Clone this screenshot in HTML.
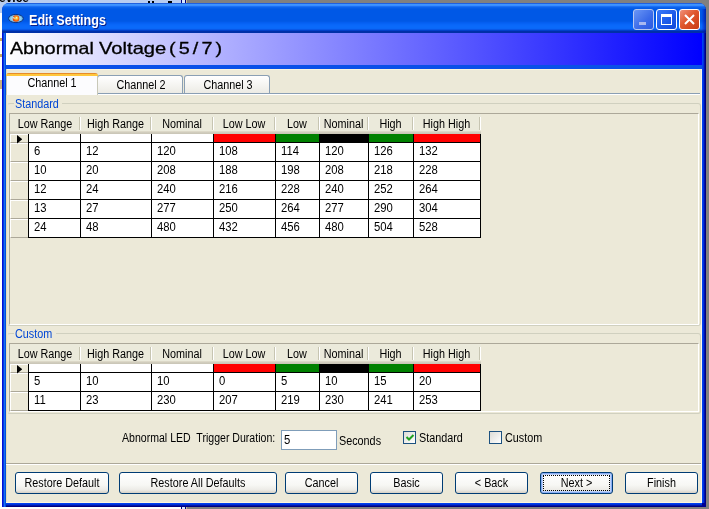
<!DOCTYPE html>
<html><head><meta charset="utf-8">
<style>
*{box-sizing:border-box;margin:0;padding:0}
html,body{width:709px;height:509px;overflow:hidden;background:#808080;font-family:"Liberation Sans",sans-serif;font-size:11px;color:#000}
.a{position:absolute}
.hdr{background:linear-gradient(to bottom,#ebeadb 0,#ebeadb 17px,#e2decd 17px,#d6d2c2 18px,#cbc7b8 19px)}
.t{white-space:nowrap;line-height:14px;font-size:12px}
.rh{background:#ece9d8;border-top:1px solid #fff;border-left:1px solid #fff;border-bottom:1px solid #aca899}
.btn{height:22px;border:1px solid #003c74;border-radius:3px;background:linear-gradient(to bottom,#fff 0%,#f7f7f4 60%,#ecebe6 85%,#d6d0c5 100%);text-align:center;line-height:20px;white-space:nowrap}
.tab{border:1px solid #8a9fb4;border-bottom:none;border-radius:3px 3px 0 0;background:linear-gradient(to bottom,#fff,#ecebe5);text-align:center;line-height:13px}
.gb{border:1px solid #d0d0bf;border-left-color:#e8e6d8;border-radius:3px}
.gt{color:#0046d5;background:#ece9d8;padding:0 2px;line-height:13px;white-space:nowrap}
#root{position:absolute;left:0;top:0;width:709px;height:509px;overflow:hidden;will-change:transform;background:#808080}
</style></head><body><div id="root">
<div class="a" style="left:0;top:0;width:186px;height:14px;background:#b8ccf0"></div>
<div class="a" style="left:0;top:13px;width:2px;height:496px;background:#fff"></div>
<div class="a" style="left:0;top:-8px;width:40px;height:11px;overflow:hidden;font-weight:bold;font-size:12px;line-height:12px;color:#000;white-space:nowrap"><span style="position:absolute;left:-1px;top:0">evice</span></div>
<div class="a" style="left:148px;top:1px;width:2px;height:2px;background:#000"></div><div class="a" style="left:152px;top:1px;width:2px;height:2px;background:#000"></div>
<div class="a" style="left:168px;top:1px;width:4px;height:2px;background:#000"></div>
<div class="a" style="left:181px;top:0px;width:1px;height:4px;background:#000080"></div><div class="a" style="left:182px;top:0px;width:3px;height:4px;background:#d8e8ff"></div><div class="a" style="left:185px;top:0px;width:1px;height:4px;background:#000080"></div><div class="a" style="left:186px;top:0px;width:1px;height:4px;background:#c8b890"></div>
<div class="a" style="left:181px;top:507px;width:1px;height:4px;background:#000080"></div><div class="a" style="left:182px;top:507px;width:3px;height:4px;background:#d8e8ff"></div><div class="a" style="left:185px;top:507px;width:1px;height:4px;background:#000080"></div><div class="a" style="left:186px;top:507px;width:1px;height:4px;background:#c8b890"></div>
<div class="a" style="left:0;top:507px;width:181px;height:2px;background:#fff"></div>
<div class="a" style="left:0;top:38px;width:2px;height:3px;background:#c8a860"></div><div class="a" style="left:0;top:54px;width:2px;height:3px;background:#c8a860"></div><div class="a" style="left:0;top:80px;width:2px;height:9px;background:#c8b080"></div>
<div class="a" style="left:2px;top:3px;width:704px;height:504px;border-radius:7px 7px 0 0;background:linear-gradient(to right,#0010d8 0,#0010d8 1px,#0838e0 1px,#0838e0 2px,#1870f0 2px,#1870f0 3px,#0050e0 3px,#0050e0 4px,#0a50e8 4px,#0a50e8 700px,#0040f0 700px,#0040f0 701px,#0030e0 701px,#0030e0 702px,#0010b0 702px,#0010b0 703px,#000080 703px)"></div>
<div class="a" style="left:6px;top:503px;width:696px;height:4px;background:linear-gradient(to bottom,#0040f0 0,#0040f0 1px,#0030d8 1px,#0030d8 2px,#0018a8 2px,#0018a8 3px,#000080 3px)"></div>
<div class="a" style="left:2px;top:503px;width:4px;height:4px;background:linear-gradient(to right,#0010d8 0,#0010d8 1px,#0838e0 1px,#0838e0 2px,#1870f0 2px,#1870f0 3px,#0050e0 3px)"></div>
<div class="a" style="left:702px;top:503px;width:4px;height:4px;background:#000090"></div>
<div class="a" style="left:2px;top:3px;width:704px;height:30px;border-radius:7px 7px 0 0;
 background:linear-gradient(to bottom,#2060e0 0px,#2060e0 1px,#3d95ff 1px,#3d95ff 2px,#3a8cff 2px,#3a8cff 3px,#1a70f5 3px,#1a70f5 4px,#0a62ec 4px,#0a62ec 5px,#045ce8 5px,#045ce8 6px,#0058e6 6px,#0058e6 7px,#0058e6 7px,#0058e6 8px,#0058e6 8px,#0058e6 9px,#0058e6 9px,#0058e6 10px,#0058e6 10px,#0058e6 11px,#0058e6 11px,#0058e6 12px,#0058e6 12px,#0058e6 13px,#0058e6 13px,#0058e6 14px,#0058e6 14px,#0058e6 15px,#0058e6 15px,#0058e6 16px,#0058e6 16px,#0058e6 17px,#0058e6 17px,#0058e6 18px,#025ae8 18px,#025ae8 19px,#045ef0 19px,#045ef0 20px,#0662f4 20px,#0662f4 21px,#0866f8 21px,#0866f8 22px,#0a68fa 22px,#0a68fa 23px,#0a6afa 23px,#0a6afa 24px,#0a6afa 24px,#0a6afa 25px,#0a68f8 25px,#0a68f8 26px,#0858e8 26px,#0858e8 27px,#0040c8 27px,#0040c8 28px,#0030a8 28px,#0030a8 29px)"></div>
<div class="a" style="left:702px;top:9px;width:4px;height:24px;background:linear-gradient(to right,rgba(0,40,230,.15),rgba(0,20,180,.45) 2px,rgba(0,0,128,.6))"></div>
<svg class="a" style="left:6px;top:12px" width="20" height="14"><defs><radialGradient id="og" cx="0.5" cy="0.5" r="0.55" fx="0.62" fy="0.38"><stop offset="0" stop-color="#fffef0"/><stop offset="0.25" stop-color="#ffd040"/><stop offset="0.65" stop-color="#f87010"/><stop offset="1" stop-color="#d02800"/></radialGradient><radialGradient id="eg" cx="0.5" cy="0.5" r="0.5"><stop offset="0.5" stop-color="#a8e0f8"/><stop offset="1" stop-color="#5aa8d8"/></radialGradient></defs><ellipse cx="9.9" cy="6.5" rx="7.4" ry="4.1" fill="url(#eg)" stroke="#0c2c78" stroke-width="0.9"/><circle cx="10" cy="6.5" r="3.3" fill="url(#og)"/><path d="M6.8 4.8 L10 6.8 L6.8 6.2 Z" fill="#c0f8ff"/></svg>
<div class="a" style="left:29px;top:12px;color:#fff;font-weight:bold;font-size:14px;line-height:16px;text-shadow:1px 1px 0 #0a1e8a;white-space:nowrap;transform-origin:0 0;transform:scaleX(0.9)">Edit Settings</div>
<div class="a" style="left:633px;top:9px;width:21px;height:21px;border:1px solid #b8c8f0;border-radius:3px;background:linear-gradient(135deg,#6a96f5,#3a6ae8 60%,#2a5ae0)"><div class="a" style="left:5px;top:12px;width:7px;height:3px;background:#a8b8f0"></div></div>
<div class="a" style="left:656px;top:9px;width:21px;height:21px;border:1px solid #fff;border-radius:3px;background:linear-gradient(135deg,#3a78f8,#1a58e8 60%,#1048d8)"><div class="a" style="left:4px;top:4px;width:11px;height:11px;border:1px solid #fff;border-top-width:3px"></div></div>
<div class="a" style="left:679px;top:9px;width:21px;height:21px;border:1px solid #fff;border-radius:3px;background:linear-gradient(135deg,#f0907a,#e0582e 45%,#c83a12)"><svg class="a" style="left:4px;top:4px" width="11" height="11"><path d="M1 1 L10 10 M10 1 L1 10" stroke="#fff" stroke-width="2"/></svg></div>
<div class="a" style="left:6px;top:33px;width:696px;height:32px;background:linear-gradient(to right,#fff,#0000ff)"></div>
<div class="a" style="left:6px;top:65px;width:696px;height:4px;background:#0a50e8"></div>
<div class="a" style="left:10px;top:38px;font-size:16.5px;line-height:20px;-webkit-text-stroke:0.3px #000;white-space:nowrap;letter-spacing:0px;transform-origin:0 0;transform:scaleX(1.186)">Abnormal</div>
<div class="a" style="left:99px;top:38px;font-size:16.5px;line-height:20px;-webkit-text-stroke:0.3px #000;white-space:nowrap;letter-spacing:0px;transform-origin:0 0;transform:scaleX(1.222)">Voltage</div>
<div class="a" style="left:169px;top:38px;font-size:16.5px;line-height:20px;-webkit-text-stroke:0.3px #000;white-space:nowrap;letter-spacing:2.6px;transform-origin:0 0;transform:scaleX(1.2)">(5/7)</div>
<div class="a" style="left:6px;top:69px;width:696px;height:434px;background:#ece9d8"></div>
<div class="a" style="left:6px;top:69px;width:696px;height:1px;background:#fdf6dc"></div>
<div class="a" style="left:6px;top:69px;width:1px;height:434px;background:#e4dcb8"></div>
<div class="a" style="left:6px;top:502px;width:696px;height:1px;background:#fdf6dc"></div>
<div class="a" style="left:701px;top:69px;width:1px;height:434px;background:#fdf8e8"></div>
<div class="a" style="left:6px;top:93px;width:694px;height:1px;background:#8a9fb4"></div>
<div class="a" style="left:6px;top:94px;width:694px;height:1px;background:#fff"></div>
<div class="a tab" style="left:97px;top:75px;width:86px;height:18px"></div>
<div class="a t" style="left:98px;top:78px;width:86px;text-align:center;transform:scaleX(0.9);transform-origin:50% 0;">Channel 2</div>
<div class="a tab" style="left:184px;top:75px;width:86px;height:18px"></div>
<div class="a t" style="left:185px;top:78px;width:86px;text-align:center;transform:scaleX(0.9);transform-origin:50% 0;">Channel 3</div>
<div class="a" style="left:6px;top:73px;width:92px;height:22px;border:1px solid #c8c8b8;border-bottom:none;border-top:none;border-radius:3px 3px 0 0;background:#fcfcfe"><div class="a" style="left:-1px;top:0;width:92px;height:3px;border-radius:3px 3px 0 0;background:linear-gradient(to bottom,#e68b2c 0,#e68b2c 1px,#ffc73c 1px)"></div></div>
<div class="a t" style="left:6px;top:76px;width:92px;text-align:center;transform:scaleX(0.9);transform-origin:50% 0;">Channel 1</div>
<div class="a gb" style="left:7px;top:103px;width:694px;height:223px"></div>
<div class="a" style="left:14px;top:100px;width:48px;height:8px;background:#ece9d8"></div>
<div class="a t" style="left:15px;top:97px;color:#0046d5;transform:scaleX(0.9);transform-origin:0 0;">Standard</div>
<div class="a gb" style="left:7px;top:333px;width:694px;height:81px"></div>
<div class="a" style="left:14px;top:330px;width:42px;height:8px;background:#ece9d8"></div>
<div class="a t" style="left:15px;top:327px;color:#0046d5;transform:scaleX(0.9);transform-origin:0 0;">Custom</div>
<div class="a" style="left:9px;top:113px;width:690px;height:212px;border-top:1px solid #aca899;border-left:1px solid #aca899;border-right:1px solid #fff;border-bottom:1px solid #fff"></div>
<div class="a hdr" style="left:10px;top:114px;width:471px;height:20px"></div>
<div class="a" style="left:79px;top:117px;width:1px;height:13px;background:#c7c5b2"></div>
<div class="a" style="left:80px;top:117px;width:1px;height:13px;background:#fff"></div>
<div class="a" style="left:150px;top:117px;width:1px;height:13px;background:#c7c5b2"></div>
<div class="a" style="left:151px;top:117px;width:1px;height:13px;background:#fff"></div>
<div class="a" style="left:212px;top:117px;width:1px;height:13px;background:#c7c5b2"></div>
<div class="a" style="left:213px;top:117px;width:1px;height:13px;background:#fff"></div>
<div class="a" style="left:274px;top:117px;width:1px;height:13px;background:#c7c5b2"></div>
<div class="a" style="left:275px;top:117px;width:1px;height:13px;background:#fff"></div>
<div class="a" style="left:318px;top:117px;width:1px;height:13px;background:#c7c5b2"></div>
<div class="a" style="left:319px;top:117px;width:1px;height:13px;background:#fff"></div>
<div class="a" style="left:367px;top:117px;width:1px;height:13px;background:#c7c5b2"></div>
<div class="a" style="left:368px;top:117px;width:1px;height:13px;background:#fff"></div>
<div class="a" style="left:412px;top:117px;width:1px;height:13px;background:#c7c5b2"></div>
<div class="a" style="left:413px;top:117px;width:1px;height:13px;background:#fff"></div>
<div class="a" style="left:479px;top:117px;width:1px;height:13px;background:#c7c5b2"></div>
<div class="a" style="left:480px;top:117px;width:1px;height:13px;background:#fff"></div>
<div class="a t" style="left:10px;top:117px;width:70px;text-align:center;transform:scaleX(0.9);transform-origin:50% 0;">Low Range</div>
<div class="a t" style="left:80px;top:117px;width:71px;text-align:center;transform:scaleX(0.9);transform-origin:50% 0;">High Range</div>
<div class="a t" style="left:151px;top:117px;width:62px;text-align:center;transform:scaleX(0.9);transform-origin:50% 0;">Nominal</div>
<div class="a t" style="left:213px;top:117px;width:62px;text-align:center;transform:scaleX(0.9);transform-origin:50% 0;">Low Low</div>
<div class="a t" style="left:275px;top:117px;width:44px;text-align:center;transform:scaleX(0.9);transform-origin:50% 0;">Low</div>
<div class="a t" style="left:319px;top:117px;width:49px;text-align:center;transform:scaleX(0.9);transform-origin:50% 0;">Nominal</div>
<div class="a t" style="left:368px;top:117px;width:45px;text-align:center;transform:scaleX(0.9);transform-origin:50% 0;">High</div>
<div class="a t" style="left:413px;top:117px;width:67px;text-align:center;transform:scaleX(0.9);transform-origin:50% 0;">High High</div>
<div class="a" style="left:28px;top:134px;width:453px;height:104px;background:#fff"></div>
<div class="a" style="left:214px;top:134px;width:61px;height:8px;background:#ff0000"></div>
<div class="a" style="left:276px;top:134px;width:43px;height:8px;background:#008000"></div>
<div class="a" style="left:320px;top:134px;width:48px;height:8px;background:#000000"></div>
<div class="a" style="left:369px;top:134px;width:44px;height:8px;background:#008000"></div>
<div class="a" style="left:414px;top:134px;width:66px;height:8px;background:#ff0000"></div>
<div class="a" style="left:28px;top:134px;width:1px;height:104px;background:#000"></div>
<div class="a" style="left:80px;top:134px;width:1px;height:104px;background:#000"></div>
<div class="a" style="left:151px;top:134px;width:1px;height:104px;background:#000"></div>
<div class="a" style="left:213px;top:134px;width:1px;height:104px;background:#000"></div>
<div class="a" style="left:275px;top:134px;width:1px;height:104px;background:#000"></div>
<div class="a" style="left:319px;top:134px;width:1px;height:104px;background:#000"></div>
<div class="a" style="left:368px;top:134px;width:1px;height:104px;background:#000"></div>
<div class="a" style="left:413px;top:134px;width:1px;height:104px;background:#000"></div>
<div class="a" style="left:480px;top:134px;width:1px;height:104px;background:#000"></div>
<div class="a" style="left:28px;top:142px;width:453px;height:1px;background:#000"></div>
<div class="a" style="left:28px;top:161px;width:453px;height:1px;background:#000"></div>
<div class="a" style="left:28px;top:180px;width:453px;height:1px;background:#000"></div>
<div class="a" style="left:28px;top:199px;width:453px;height:1px;background:#000"></div>
<div class="a" style="left:28px;top:218px;width:453px;height:1px;background:#000"></div>
<div class="a" style="left:28px;top:237px;width:453px;height:1px;background:#000"></div>
<div class="a rh" style="left:10px;top:134px;width:18px;height:9px"></div>
<div class="a rh" style="left:10px;top:143px;width:18px;height:19px"></div>
<div class="a rh" style="left:10px;top:162px;width:18px;height:19px"></div>
<div class="a rh" style="left:10px;top:181px;width:18px;height:19px"></div>
<div class="a rh" style="left:10px;top:200px;width:18px;height:19px"></div>
<div class="a rh" style="left:10px;top:219px;width:18px;height:19px"></div>
<svg class="a" style="left:17px;top:135px" width="6" height="9"><path d="M0 0 L5 4 L5 4.5 L0 8.5 Z" fill="#000"/></svg>
<div class="a t" style="left:34px;top:144px;transform:scaleX(0.94);transform-origin:0 0;">6</div>
<div class="a t" style="left:86px;top:144px;transform:scaleX(0.94);transform-origin:0 0;">12</div>
<div class="a t" style="left:157px;top:144px;transform:scaleX(0.94);transform-origin:0 0;">120</div>
<div class="a t" style="left:219px;top:144px;transform:scaleX(0.94);transform-origin:0 0;">108</div>
<div class="a t" style="left:281px;top:144px;transform:scaleX(0.94);transform-origin:0 0;">114</div>
<div class="a t" style="left:325px;top:144px;transform:scaleX(0.94);transform-origin:0 0;">120</div>
<div class="a t" style="left:374px;top:144px;transform:scaleX(0.94);transform-origin:0 0;">126</div>
<div class="a t" style="left:419px;top:144px;transform:scaleX(0.94);transform-origin:0 0;">132</div>
<div class="a t" style="left:34px;top:163px;transform:scaleX(0.94);transform-origin:0 0;">10</div>
<div class="a t" style="left:86px;top:163px;transform:scaleX(0.94);transform-origin:0 0;">20</div>
<div class="a t" style="left:157px;top:163px;transform:scaleX(0.94);transform-origin:0 0;">208</div>
<div class="a t" style="left:219px;top:163px;transform:scaleX(0.94);transform-origin:0 0;">188</div>
<div class="a t" style="left:281px;top:163px;transform:scaleX(0.94);transform-origin:0 0;">198</div>
<div class="a t" style="left:325px;top:163px;transform:scaleX(0.94);transform-origin:0 0;">208</div>
<div class="a t" style="left:374px;top:163px;transform:scaleX(0.94);transform-origin:0 0;">218</div>
<div class="a t" style="left:419px;top:163px;transform:scaleX(0.94);transform-origin:0 0;">228</div>
<div class="a t" style="left:34px;top:182px;transform:scaleX(0.94);transform-origin:0 0;">12</div>
<div class="a t" style="left:86px;top:182px;transform:scaleX(0.94);transform-origin:0 0;">24</div>
<div class="a t" style="left:157px;top:182px;transform:scaleX(0.94);transform-origin:0 0;">240</div>
<div class="a t" style="left:219px;top:182px;transform:scaleX(0.94);transform-origin:0 0;">216</div>
<div class="a t" style="left:281px;top:182px;transform:scaleX(0.94);transform-origin:0 0;">228</div>
<div class="a t" style="left:325px;top:182px;transform:scaleX(0.94);transform-origin:0 0;">240</div>
<div class="a t" style="left:374px;top:182px;transform:scaleX(0.94);transform-origin:0 0;">252</div>
<div class="a t" style="left:419px;top:182px;transform:scaleX(0.94);transform-origin:0 0;">264</div>
<div class="a t" style="left:34px;top:201px;transform:scaleX(0.94);transform-origin:0 0;">13</div>
<div class="a t" style="left:86px;top:201px;transform:scaleX(0.94);transform-origin:0 0;">27</div>
<div class="a t" style="left:157px;top:201px;transform:scaleX(0.94);transform-origin:0 0;">277</div>
<div class="a t" style="left:219px;top:201px;transform:scaleX(0.94);transform-origin:0 0;">250</div>
<div class="a t" style="left:281px;top:201px;transform:scaleX(0.94);transform-origin:0 0;">264</div>
<div class="a t" style="left:325px;top:201px;transform:scaleX(0.94);transform-origin:0 0;">277</div>
<div class="a t" style="left:374px;top:201px;transform:scaleX(0.94);transform-origin:0 0;">290</div>
<div class="a t" style="left:419px;top:201px;transform:scaleX(0.94);transform-origin:0 0;">304</div>
<div class="a t" style="left:34px;top:220px;transform:scaleX(0.94);transform-origin:0 0;">24</div>
<div class="a t" style="left:86px;top:220px;transform:scaleX(0.94);transform-origin:0 0;">48</div>
<div class="a t" style="left:157px;top:220px;transform:scaleX(0.94);transform-origin:0 0;">480</div>
<div class="a t" style="left:219px;top:220px;transform:scaleX(0.94);transform-origin:0 0;">432</div>
<div class="a t" style="left:281px;top:220px;transform:scaleX(0.94);transform-origin:0 0;">456</div>
<div class="a t" style="left:325px;top:220px;transform:scaleX(0.94);transform-origin:0 0;">480</div>
<div class="a t" style="left:374px;top:220px;transform:scaleX(0.94);transform-origin:0 0;">504</div>
<div class="a t" style="left:419px;top:220px;transform:scaleX(0.94);transform-origin:0 0;">528</div>
<div class="a" style="left:9px;top:343px;width:690px;height:69px;border-top:1px solid #aca899;border-left:1px solid #aca899;border-right:1px solid #fff;border-bottom:1px solid #fff"></div>
<div class="a hdr" style="left:10px;top:344px;width:471px;height:20px"></div>
<div class="a" style="left:79px;top:347px;width:1px;height:13px;background:#c7c5b2"></div>
<div class="a" style="left:80px;top:347px;width:1px;height:13px;background:#fff"></div>
<div class="a" style="left:150px;top:347px;width:1px;height:13px;background:#c7c5b2"></div>
<div class="a" style="left:151px;top:347px;width:1px;height:13px;background:#fff"></div>
<div class="a" style="left:212px;top:347px;width:1px;height:13px;background:#c7c5b2"></div>
<div class="a" style="left:213px;top:347px;width:1px;height:13px;background:#fff"></div>
<div class="a" style="left:274px;top:347px;width:1px;height:13px;background:#c7c5b2"></div>
<div class="a" style="left:275px;top:347px;width:1px;height:13px;background:#fff"></div>
<div class="a" style="left:318px;top:347px;width:1px;height:13px;background:#c7c5b2"></div>
<div class="a" style="left:319px;top:347px;width:1px;height:13px;background:#fff"></div>
<div class="a" style="left:367px;top:347px;width:1px;height:13px;background:#c7c5b2"></div>
<div class="a" style="left:368px;top:347px;width:1px;height:13px;background:#fff"></div>
<div class="a" style="left:412px;top:347px;width:1px;height:13px;background:#c7c5b2"></div>
<div class="a" style="left:413px;top:347px;width:1px;height:13px;background:#fff"></div>
<div class="a" style="left:479px;top:347px;width:1px;height:13px;background:#c7c5b2"></div>
<div class="a" style="left:480px;top:347px;width:1px;height:13px;background:#fff"></div>
<div class="a t" style="left:10px;top:347px;width:70px;text-align:center;transform:scaleX(0.9);transform-origin:50% 0;">Low Range</div>
<div class="a t" style="left:80px;top:347px;width:71px;text-align:center;transform:scaleX(0.9);transform-origin:50% 0;">High Range</div>
<div class="a t" style="left:151px;top:347px;width:62px;text-align:center;transform:scaleX(0.9);transform-origin:50% 0;">Nominal</div>
<div class="a t" style="left:213px;top:347px;width:62px;text-align:center;transform:scaleX(0.9);transform-origin:50% 0;">Low Low</div>
<div class="a t" style="left:275px;top:347px;width:44px;text-align:center;transform:scaleX(0.9);transform-origin:50% 0;">Low</div>
<div class="a t" style="left:319px;top:347px;width:49px;text-align:center;transform:scaleX(0.9);transform-origin:50% 0;">Nominal</div>
<div class="a t" style="left:368px;top:347px;width:45px;text-align:center;transform:scaleX(0.9);transform-origin:50% 0;">High</div>
<div class="a t" style="left:413px;top:347px;width:67px;text-align:center;transform:scaleX(0.9);transform-origin:50% 0;">High High</div>
<div class="a" style="left:28px;top:364px;width:453px;height:47px;background:#fff"></div>
<div class="a" style="left:214px;top:364px;width:61px;height:8px;background:#ff0000"></div>
<div class="a" style="left:276px;top:364px;width:43px;height:8px;background:#008000"></div>
<div class="a" style="left:320px;top:364px;width:48px;height:8px;background:#000000"></div>
<div class="a" style="left:369px;top:364px;width:44px;height:8px;background:#008000"></div>
<div class="a" style="left:414px;top:364px;width:66px;height:8px;background:#ff0000"></div>
<div class="a" style="left:28px;top:364px;width:1px;height:47px;background:#000"></div>
<div class="a" style="left:80px;top:364px;width:1px;height:47px;background:#000"></div>
<div class="a" style="left:151px;top:364px;width:1px;height:47px;background:#000"></div>
<div class="a" style="left:213px;top:364px;width:1px;height:47px;background:#000"></div>
<div class="a" style="left:275px;top:364px;width:1px;height:47px;background:#000"></div>
<div class="a" style="left:319px;top:364px;width:1px;height:47px;background:#000"></div>
<div class="a" style="left:368px;top:364px;width:1px;height:47px;background:#000"></div>
<div class="a" style="left:413px;top:364px;width:1px;height:47px;background:#000"></div>
<div class="a" style="left:480px;top:364px;width:1px;height:47px;background:#000"></div>
<div class="a" style="left:28px;top:372px;width:453px;height:1px;background:#000"></div>
<div class="a" style="left:28px;top:391px;width:453px;height:1px;background:#000"></div>
<div class="a" style="left:28px;top:410px;width:453px;height:1px;background:#000"></div>
<div class="a rh" style="left:10px;top:364px;width:18px;height:9px"></div>
<div class="a rh" style="left:10px;top:373px;width:18px;height:19px"></div>
<div class="a rh" style="left:10px;top:392px;width:18px;height:19px"></div>
<svg class="a" style="left:17px;top:365px" width="6" height="9"><path d="M0 0 L5 4 L5 4.5 L0 8.5 Z" fill="#000"/></svg>
<div class="a t" style="left:34px;top:374px;transform:scaleX(0.94);transform-origin:0 0;">5</div>
<div class="a t" style="left:86px;top:374px;transform:scaleX(0.94);transform-origin:0 0;">10</div>
<div class="a t" style="left:157px;top:374px;transform:scaleX(0.94);transform-origin:0 0;">10</div>
<div class="a t" style="left:219px;top:374px;transform:scaleX(0.94);transform-origin:0 0;">0</div>
<div class="a t" style="left:281px;top:374px;transform:scaleX(0.94);transform-origin:0 0;">5</div>
<div class="a t" style="left:325px;top:374px;transform:scaleX(0.94);transform-origin:0 0;">10</div>
<div class="a t" style="left:374px;top:374px;transform:scaleX(0.94);transform-origin:0 0;">15</div>
<div class="a t" style="left:419px;top:374px;transform:scaleX(0.94);transform-origin:0 0;">20</div>
<div class="a t" style="left:34px;top:393px;transform:scaleX(0.94);transform-origin:0 0;">11</div>
<div class="a t" style="left:86px;top:393px;transform:scaleX(0.94);transform-origin:0 0;">23</div>
<div class="a t" style="left:157px;top:393px;transform:scaleX(0.94);transform-origin:0 0;">230</div>
<div class="a t" style="left:219px;top:393px;transform:scaleX(0.94);transform-origin:0 0;">207</div>
<div class="a t" style="left:281px;top:393px;transform:scaleX(0.94);transform-origin:0 0;">219</div>
<div class="a t" style="left:325px;top:393px;transform:scaleX(0.94);transform-origin:0 0;">230</div>
<div class="a t" style="left:374px;top:393px;transform:scaleX(0.94);transform-origin:0 0;">241</div>
<div class="a t" style="left:419px;top:393px;transform:scaleX(0.94);transform-origin:0 0;">253</div>
<div class="a t" style="left:122px;top:431px;transform:scaleX(0.88);transform-origin:0 0;">Abnormal LED&nbsp; Trigger Duration:</div>
<div class="a" style="left:281px;top:430px;width:56px;height:20px;border:1px solid #7f9db9;background:#fff"></div>
<div class="a t" style="left:284px;top:433px;transform:scaleX(0.94);transform-origin:0 0;">5</div>
<div class="a t" style="left:339px;top:434px;transform:scaleX(0.9);transform-origin:0 0;">Seconds</div>
<div class="a" style="left:403px;top:431px;width:13px;height:13px;border:1px solid #1c5180;background:linear-gradient(135deg,#dcdcd7,#fff)"><svg class="a" style="left:1px;top:1px" width="11" height="11"><path d="M1.5 4 L4 6.5 L8.5 2" stroke="#21a121" stroke-width="2" fill="none"/></svg></div>
<div class="a t" style="left:419px;top:431px;transform:scaleX(0.9);transform-origin:0 0;">Standard</div>
<div class="a" style="left:489px;top:431px;width:13px;height:13px;border:1px solid #1c5180;background:linear-gradient(135deg,#dcdcd7,#fff)"></div>
<div class="a t" style="left:505px;top:431px;transform:scaleX(0.9);transform-origin:0 0;">Custom</div>
<div class="a" style="left:6px;top:463px;width:695px;height:1px;background:#aca899"></div>
<div class="a" style="left:6px;top:464px;width:695px;height:1px;background:#fff"></div>
<div class="a btn" style="left:15px;top:472px;width:94px"></div>
<div class="a t" style="left:15px;top:476px;width:94px;text-align:center;transform:scaleX(0.9);transform-origin:50% 0;">Restore Default</div>
<div class="a btn" style="left:119px;top:472px;width:158px"></div>
<div class="a t" style="left:119px;top:476px;width:158px;text-align:center;transform:scaleX(0.9);transform-origin:50% 0;">Restore All Defaults</div>
<div class="a btn" style="left:285px;top:472px;width:73px"></div>
<div class="a t" style="left:285px;top:476px;width:73px;text-align:center;transform:scaleX(0.9);transform-origin:50% 0;">Cancel</div>
<div class="a btn" style="left:370px;top:472px;width:73px"></div>
<div class="a t" style="left:370px;top:476px;width:73px;text-align:center;transform:scaleX(0.9);transform-origin:50% 0;">Basic</div>
<div class="a btn" style="left:455px;top:472px;width:73px"></div>
<div class="a t" style="left:455px;top:476px;width:73px;text-align:center;transform:scaleX(0.9);transform-origin:50% 0;">&lt; Back</div>
<div class="a btn" style="left:540px;top:472px;width:73px;box-shadow:inset 0 0 0 1px #89adf4, inset 0 0 0 2px #c0d4f8"><div class="a" style="left:2px;top:2px;width:67px;height:16px;border:1px dotted #000"></div></div>
<div class="a t" style="left:540px;top:476px;width:73px;text-align:center;transform:scaleX(0.9);transform-origin:50% 0;">Next &gt;</div>
<div class="a btn" style="left:625px;top:472px;width:73px"></div>
<div class="a t" style="left:625px;top:476px;width:73px;text-align:center;transform:scaleX(0.9);transform-origin:50% 0;">Finish</div>
</div></body></html>
